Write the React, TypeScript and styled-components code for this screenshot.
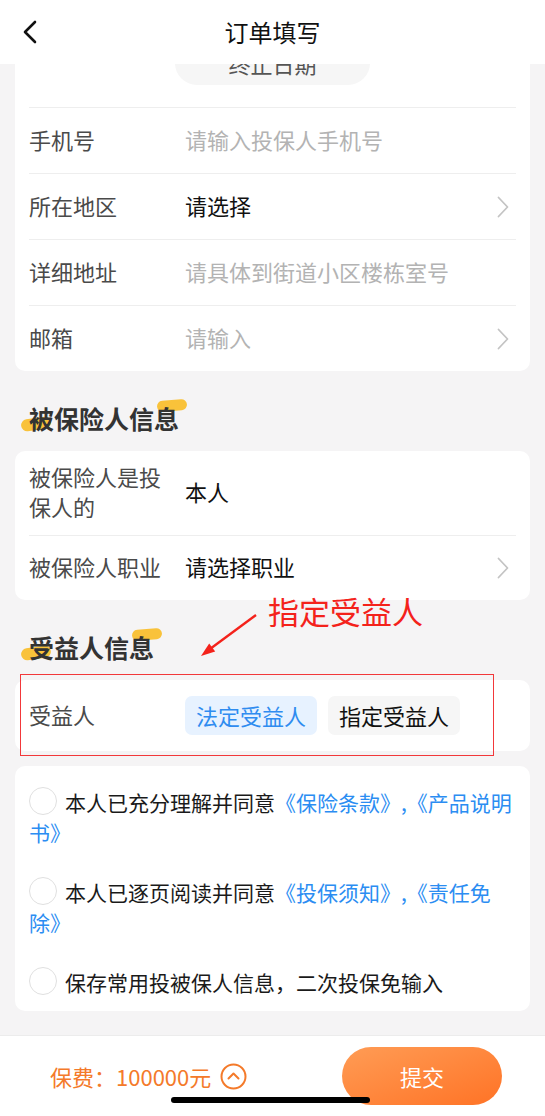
import styled, { createGlobalStyle } from 'styled-components';

const GlobalStyle = createGlobalStyle`
  * {
    box-sizing: border-box;
  }

  html,
  body {
    margin: 0;
    padding: 0;
  }

  body {
    font-family: 'Noto Sans CJK SC', 'Noto Sans', sans-serif;
    background: #f5f4f5;
    color: #111;
  }
`;

type Field = {
  label: string;
  value: string;
  placeholder?: boolean;
  arrow?: boolean;
  height?: number;
};

const HOLDER_FIELDS: Field[] = [
  { label: '手机号', value: '请输入投保人手机号', placeholder: true },
  { label: '所在地区', value: '请选择', arrow: true },
  { label: '详细地址', value: '请具体到街道小区楼栋室号', placeholder: true },
  { label: '邮箱', value: '请输入', placeholder: true, arrow: true },
];

const INSURED_FIELDS: Field[] = [
  { label: '被保险人是投保人的', value: '本人', height: 84 },
  { label: '被保险人职业', value: '请选择职业', arrow: true, height: 65 },
];

const Screen = styled.div`
  position: relative;
  width: 100%;
  height: 100vh;
  display: flex;
  flex-direction: column;
  overflow: hidden;
  background: #f5f4f5;
`;

const Header = styled.header`
  position: relative;
  z-index: 2;
  flex: 0 0 64px;
  display: grid;
  grid-template-columns: 80px 1fr 80px;
  align-items: center;
  background: #fff;
`;

const BackButton = styled.button`
  display: flex;
  align-items: center;
  height: 64px;
  padding: 0 0 0 22px;
  border: 0;
  background: none;
  cursor: pointer;
`;

const HeaderTitle = styled.h1`
  margin: 0;
  font-size: 24px;
  font-weight: 400;
  line-height: 64px;
  text-align: center;
  color: #111;
`;

const ScrollArea = styled.main`
  flex: 1;
  overflow: hidden;
`;

const ScrollContent = styled.div`
  margin-top: -39px;
  padding: 0 15px;
`;

const Card = styled.section<{ $padding?: string }>`
  padding: ${({ $padding }) => $padding ?? '0 14px'};
  border-radius: 10px;
  background: #fff;
`;

const DateWrap = styled.div`
  display: flex;
  justify-content: center;
  padding: 16px 0 22px;
`;

const DatePill = styled.div`
  width: 195px;
  height: 44px;
  display: flex;
  align-items: center;
  justify-content: center;
  border-radius: 22px;
  background: #f6f6f6;
  color: #555;
  font-size: 22px;
`;

const Row = styled.div<{ $height?: number; $divider?: boolean }>`
  display: flex;
  align-items: center;
  min-height: ${({ $height }) => $height ?? 66}px;
  border-top: ${({ $divider }) => ($divider ? '1px solid #eeeeee' : '0')};
`;

const Label = styled.div`
  flex: 0 0 140px;
  margin-right: 16px;
  padding-bottom: 4px;
  font-size: 22px;
  line-height: 30px;
  color: #4a4a4a;
`;

const Value = styled.div<{ $placeholder?: boolean }>`
  flex: 1;
  padding-bottom: 4px;
  font-size: 22px;
  line-height: 30px;
  color: ${({ $placeholder }) => ($placeholder ? '#b3b3b3' : '#111')};
`;

const Chevron = styled.svg`
  flex: 0 0 auto;
  margin-right: 7px;
`;

const SectionHead = styled.div`
  padding: 30px 14px 16px;
`;

const SectionTitle = styled.h2`
  position: relative;
  z-index: 0;
  display: inline-block;
  margin: 0;
  font-size: 25px;
  font-weight: 700;
  line-height: 34px;
  color: #333;

  &::before,
  &::after {
    content: '';
    position: absolute;
    z-index: -1;
    width: 30px;
    border-radius: 6px;
    background: #f9c23a;
  }

  &::before {
    left: -8px;
    top: 17px;
    height: 12px;
    transform: rotate(-8deg);
  }

  &::after {
    right: -8px;
    top: -1px;
    height: 11px;
    transform: rotate(-5deg);
  }
`;

const Choices = styled.div`
  display: flex;
  gap: 11px;
`;

const Choice = styled.button<{ $active?: boolean }>`
  height: 39px;
  padding: 0 11px 2px;
  border: 0;
  border-radius: 7px;
  font-family: inherit;
  font-size: 22px;
  background: ${({ $active }) => ($active ? '#e7f2ff' : '#f6f6f6')};
  color: ${({ $active }) => ($active ? '#2f8cf0' : '#111')};
  cursor: pointer;
`;

const Gap = styled.div`
  height: 15px;
`;

const Agreement = styled.p`
  margin: 0;
  font-size: 21px;
  line-height: 30px;
  color: #1a1a1a;

  & + & {
    margin-top: 30px;
  }
`;

const Radio = styled.span`
  display: inline-block;
  width: 28px;
  height: 28px;
  margin-right: 8px;
  border: 1.5px solid #e0e0e0;
  border-radius: 50%;
  vertical-align: top;
`;

const DocLink = styled.span`
  color: #2b8df2;
`;

const Footer = styled.footer`
  flex: 0 0 81px;
  display: flex;
  align-items: center;
  justify-content: space-between;
  padding: 0 43px 0 50px;
  border-top: 1px solid #ececec;
  background: #fff;
`;

const Price = styled.div`
  display: flex;
  align-items: center;
  gap: 9px;
  font-size: 22px;
  color: #f47a2a;
`;

const SubmitButton = styled.button`
  width: 160px;
  height: 58px;
  border: 0;
  border-radius: 29px;
  background: linear-gradient(160deg, #ff9c55 0%, #ff7326 100%);
  color: #fff;
  font-family: inherit;
  font-size: 22px;
  cursor: pointer;
`;

const HomeIndicator = styled.div`
  position: absolute;
  left: 171px;
  bottom: 13px;
  width: 199px;
  height: 6px;
  border-radius: 3px;
  background: #000;
`;

const MarkText = styled.div`
  position: absolute;
  left: 268px;
  top: 595px;
  font-size: 31px;
  line-height: 31px;
  color: #f4221b;
`;

const MarkArrow = styled.svg`
  position: absolute;
  left: 190px;
  top: 605px;
`;

const MarkBox = styled.div`
  position: absolute;
  left: 20px;
  top: 674px;
  width: 474px;
  height: 82px;
  border: 1.5px solid #f2383a;
`;

const RightArrow = () => (
  <Chevron width="12" height="22" viewBox="0 0 12 22">
    <polyline
      points="1.5,1.5 10.5,11 1.5,20.5"
      fill="none"
      stroke="#c4c4c4"
      strokeWidth="1.8"
      strokeLinecap="round"
      strokeLinejoin="round"
    />
  </Chevron>
);

const FieldRow = ({ field, divider }: { field: Field; divider: boolean }) => (
  <Row $height={field.height} $divider={divider}>
    <Label>{field.label}</Label>
    <Value $placeholder={field.placeholder}>{field.value}</Value>
    {field.arrow && <RightArrow />}
  </Row>
);

const App = () => (
  <>
    <GlobalStyle />
    <Screen>
      <Header>
        <BackButton aria-label="返回">
          <svg width="16" height="24" viewBox="0 0 16 24">
            <polyline
              points="13,2 3,12 13,22"
              fill="none"
              stroke="#111"
              strokeWidth="2.6"
              strokeLinecap="round"
              strokeLinejoin="round"
            />
          </svg>
        </BackButton>
        <HeaderTitle>订单填写</HeaderTitle>
        <div />
      </Header>

      <ScrollArea>
        <ScrollContent>
          <Card>
            <DateWrap>
              <DatePill>终止日期</DatePill>
            </DateWrap>
            {HOLDER_FIELDS.map((field) => (
              <FieldRow key={field.label} field={field} divider />
            ))}
          </Card>

          <SectionHead>
            <SectionTitle>被保险人信息</SectionTitle>
          </SectionHead>
          <Card>
            {INSURED_FIELDS.map((field, index) => (
              <FieldRow key={field.label} field={field} divider={index > 0} />
            ))}
          </Card>

          <SectionHead>
            <SectionTitle>受益人信息</SectionTitle>
          </SectionHead>
          <Card>
            <Row $height={71}>
              <Label>受益人</Label>
              <Choices>
                <Choice $active>法定受益人</Choice>
                <Choice>指定受益人</Choice>
              </Choices>
            </Row>
          </Card>

          <Gap />
          <Card $padding="21px 14px 14px">
            <Agreement>
              <Radio />
              本人已充分理解并同意<DocLink>《保险条款》,《产品说明书》</DocLink>
            </Agreement>
            <Agreement>
              <Radio />
              本人已逐页阅读并同意<DocLink>《投保须知》,《责任免除》</DocLink>
            </Agreement>
            <Agreement>
              <Radio />
              保存常用投被保人信息，二次投保免输入
            </Agreement>
          </Card>
        </ScrollContent>
      </ScrollArea>

      <Footer>
        <Price>
          <span>保费：100000元</span>
          <svg width="27" height="27" viewBox="0 0 27 27">
            <circle cx="13.5" cy="13.5" r="12" fill="none" stroke="#f47a2a" strokeWidth="2" />
            <polyline
              points="8.5,15.5 13.5,10.5 18.5,15.5"
              fill="none"
              stroke="#f47a2a"
              strokeWidth="2"
              strokeLinecap="round"
              strokeLinejoin="round"
            />
          </svg>
        </Price>
        <SubmitButton>提交</SubmitButton>
      </Footer>

      <MarkText>指定受益人</MarkText>
      <MarkArrow width="75" height="60" viewBox="0 0 75 60">
        <line x1="66" y1="10" x2="20" y2="44" stroke="#f4221b" strokeWidth="2.4" />
        <polygon points="11,51 25.2,46.6 19.2,38.6" fill="#f4221b" />
      </MarkArrow>
      <MarkBox />
      <HomeIndicator />
    </Screen>
  </>
);

export default App;
